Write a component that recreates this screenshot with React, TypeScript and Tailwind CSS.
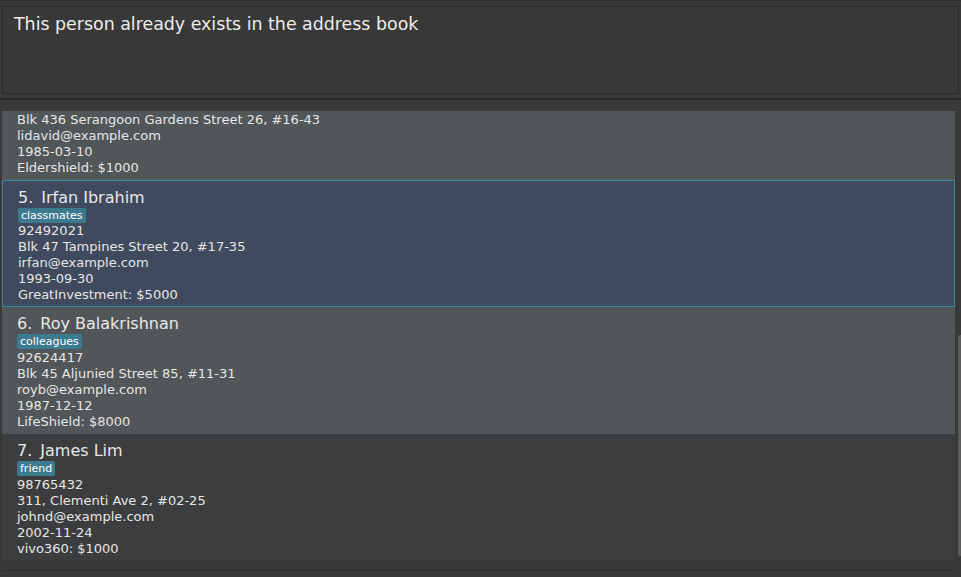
import React from "react";

type Person = {
  index: number;
  name: string;
  tag: string;
  phone: string;
  address: string;
  email: string;
  birthday: string;
  policy: string;
};

const people: Person[] = [
  {
    index: 5,
    name: "Irfan Ibrahim",
    tag: "classmates",
    phone: "92492021",
    address: "Blk 47 Tampines Street 20, #17-35",
    email: "irfan@example.com",
    birthday: "1993-09-30",
    policy: "GreatInvestment: $5000",
  },
  {
    index: 6,
    name: "Roy Balakrishnan",
    tag: "colleagues",
    phone: "92624417",
    address: "Blk 45 Aljunied Street 85, #11-31",
    email: "royb@example.com",
    birthday: "1987-12-12",
    policy: "LifeShield: $8000",
  },
  {
    index: 7,
    name: "James Lim",
    tag: "friend",
    phone: "98765432",
    address: "311, Clementi Ave 2, #02-25",
    email: "johnd@example.com",
    birthday: "2002-11-24",
    policy: "vivo360: $1000",
  },
];

const cardColours = [
  "bg-[#3f4a5e] border border-[#3a8a9e] pt-[6px] pl-[15px]",
  "bg-[#515658] pt-[6px] pl-[15px]",
  "bg-[#3c3d3f] pt-[6px] pl-[15px]",
];

const PersonCard = ({ person, style }: { person: Person; style: string }) => (
  <div className={`h-[127px] pb-[4px] flex flex-col ${style}`}>
    <div className="h-[21px] leading-[21px] text-[16px] text-[#e8e8e8] flex">
      <span>{person.index}.</span>
      <span className="ml-[8px]">{person.name}</span>
    </div>
    <div className="h-[16px] flex items-start">
      <span className="h-[15px] leading-[15px] px-[3px] rounded-[2px] bg-[#3c7a90] text-[11px] text-white">
        {person.tag}
      </span>
    </div>
    <div className="text-[13px] leading-[16px] text-[#e6e6e6]">
      <div>{person.phone}</div>
      <div>{person.address}</div>
      <div>{person.email}</div>
      <div>{person.birthday}</div>
      <div>{person.policy}</div>
    </div>
  </div>
);

export default function App() {
  return (
    <div className="w-[961px] h-[577px] overflow-hidden bg-[#383838] font-['DejaVu_Sans',sans-serif] flex flex-col">
      <div className="h-px bg-[#2e2e2e]" />
      <div className="pt-[5px] px-[2px]">
        <div className="h-[88px] border border-[#2a2a2a] px-[11px] pt-[7px] text-[17.4px] leading-[20px] text-[#ececec]">
          This person already exists in the address book
        </div>
      </div>
      <div className="h-[4px]" />
      <div className="h-[2px] bg-[#2b2b2b]" />
      <div className="flex-1 flex bg-[#393939] pl-[2px] pt-[11px]">
        <div className="w-[953px] flex flex-col">
          <div className="h-[69px] bg-[#515658] pl-[15px] pt-[1px] pb-[4px] text-[13px] leading-[16px] text-[#e6e6e6]">
            <div>Blk 436 Serangoon Gardens Street 26, #16-43</div>
            <div>lidavid@example.com</div>
            <div>1985-03-10</div>
            <div>Eldershield: $1000</div>
          </div>
          {people.map((p, i) => (
            <PersonCard key={p.index} person={p} style={cardColours[i]} />
          ))}
          <div className="h-[9px]" />
          <div className="h-px bg-[#2e2e2e]" />
        </div>
        <div className="w-[6px] flex flex-col">
          <div className="h-[224px]" />
          <div className="ml-[3px] w-[3px] h-[221px] rounded-l-[2px] bg-[#5c5c5c]" />
        </div>
      </div>
    </div>
  );
}
